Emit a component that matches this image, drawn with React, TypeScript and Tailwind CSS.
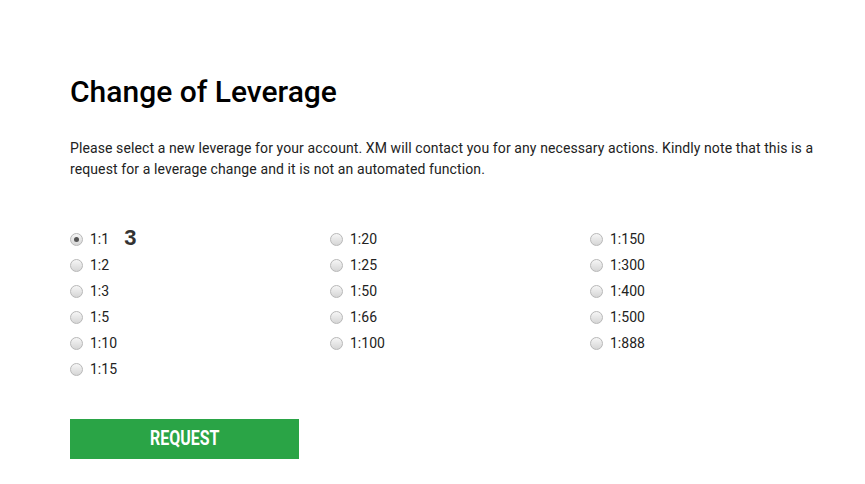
import React from 'react';

const columns: string[][] = [
  ['1:1', '1:2', '1:3', '1:5', '1:10', '1:15'],
  ['1:20', '1:25', '1:50', '1:66', '1:100'],
  ['1:150', '1:300', '1:400', '1:500', '1:888'],
];

const Radio: React.FC<{ checked?: boolean }> = ({ checked }) => (
  <span className="relative inline-block w-[13px] h-[13px] rounded-full border border-[#b8b8b8] bg-gradient-to-b from-[#f6f6f6] to-[#d6d6d6] shrink-0">
    {checked && (
      <span className="absolute left-[3px] top-[3px] w-[5px] h-[5px] rounded-full bg-[#555]" />
    )}
  </span>
);

export default function App() {
  return (
    <div className="bg-white w-[865px] h-[484px] font-['Roboto',sans-serif] text-[#222]">
      <div className="pl-[70px] pr-[50px] pt-[72px]">
        <h1 className="text-[30px] font-medium leading-[40px] text-black">Change of Leverage</h1>
        <p className="mt-[26px] text-[14px] leading-[21px] tracking-[0.1px] text-[#222]">
          Please select a new leverage for your account. XM will contact you for any necessary actions. Kindly note that this is a request for a leverage change and it is not an automated function.
        </p>
        <div className="mt-[46px] flex">
          {columns.map((col, ci) => (
            <div key={ci} className="w-[260px] shrink-0 flex flex-col">
              {col.map((v, i) => (
                <label key={v} className="flex items-center h-[26px] gap-[7px] text-[14px] text-[#222]">
                  <Radio checked={ci === 0 && i === 0} />
                  <span>{v}</span>
                  {ci === 0 && i === 0 && (
                    <span className="ml-[8px] -mt-[2px] text-[22px] leading-[22px] font-bold text-[#333] font-['Liberation_Sans',sans-serif]">3</span>
                  )}
                </label>
              ))}
            </div>
          ))}
        </div>
        <button className="mt-[37px] w-[229px] h-[40px] bg-[#2aa446] text-white flex items-center justify-center">
          <span className="inline-block text-[21px] font-bold scale-x-[0.76] font-['Roboto',sans-serif]">REQUEST</span>
        </button>
      </div>
    </div>
  );
}
